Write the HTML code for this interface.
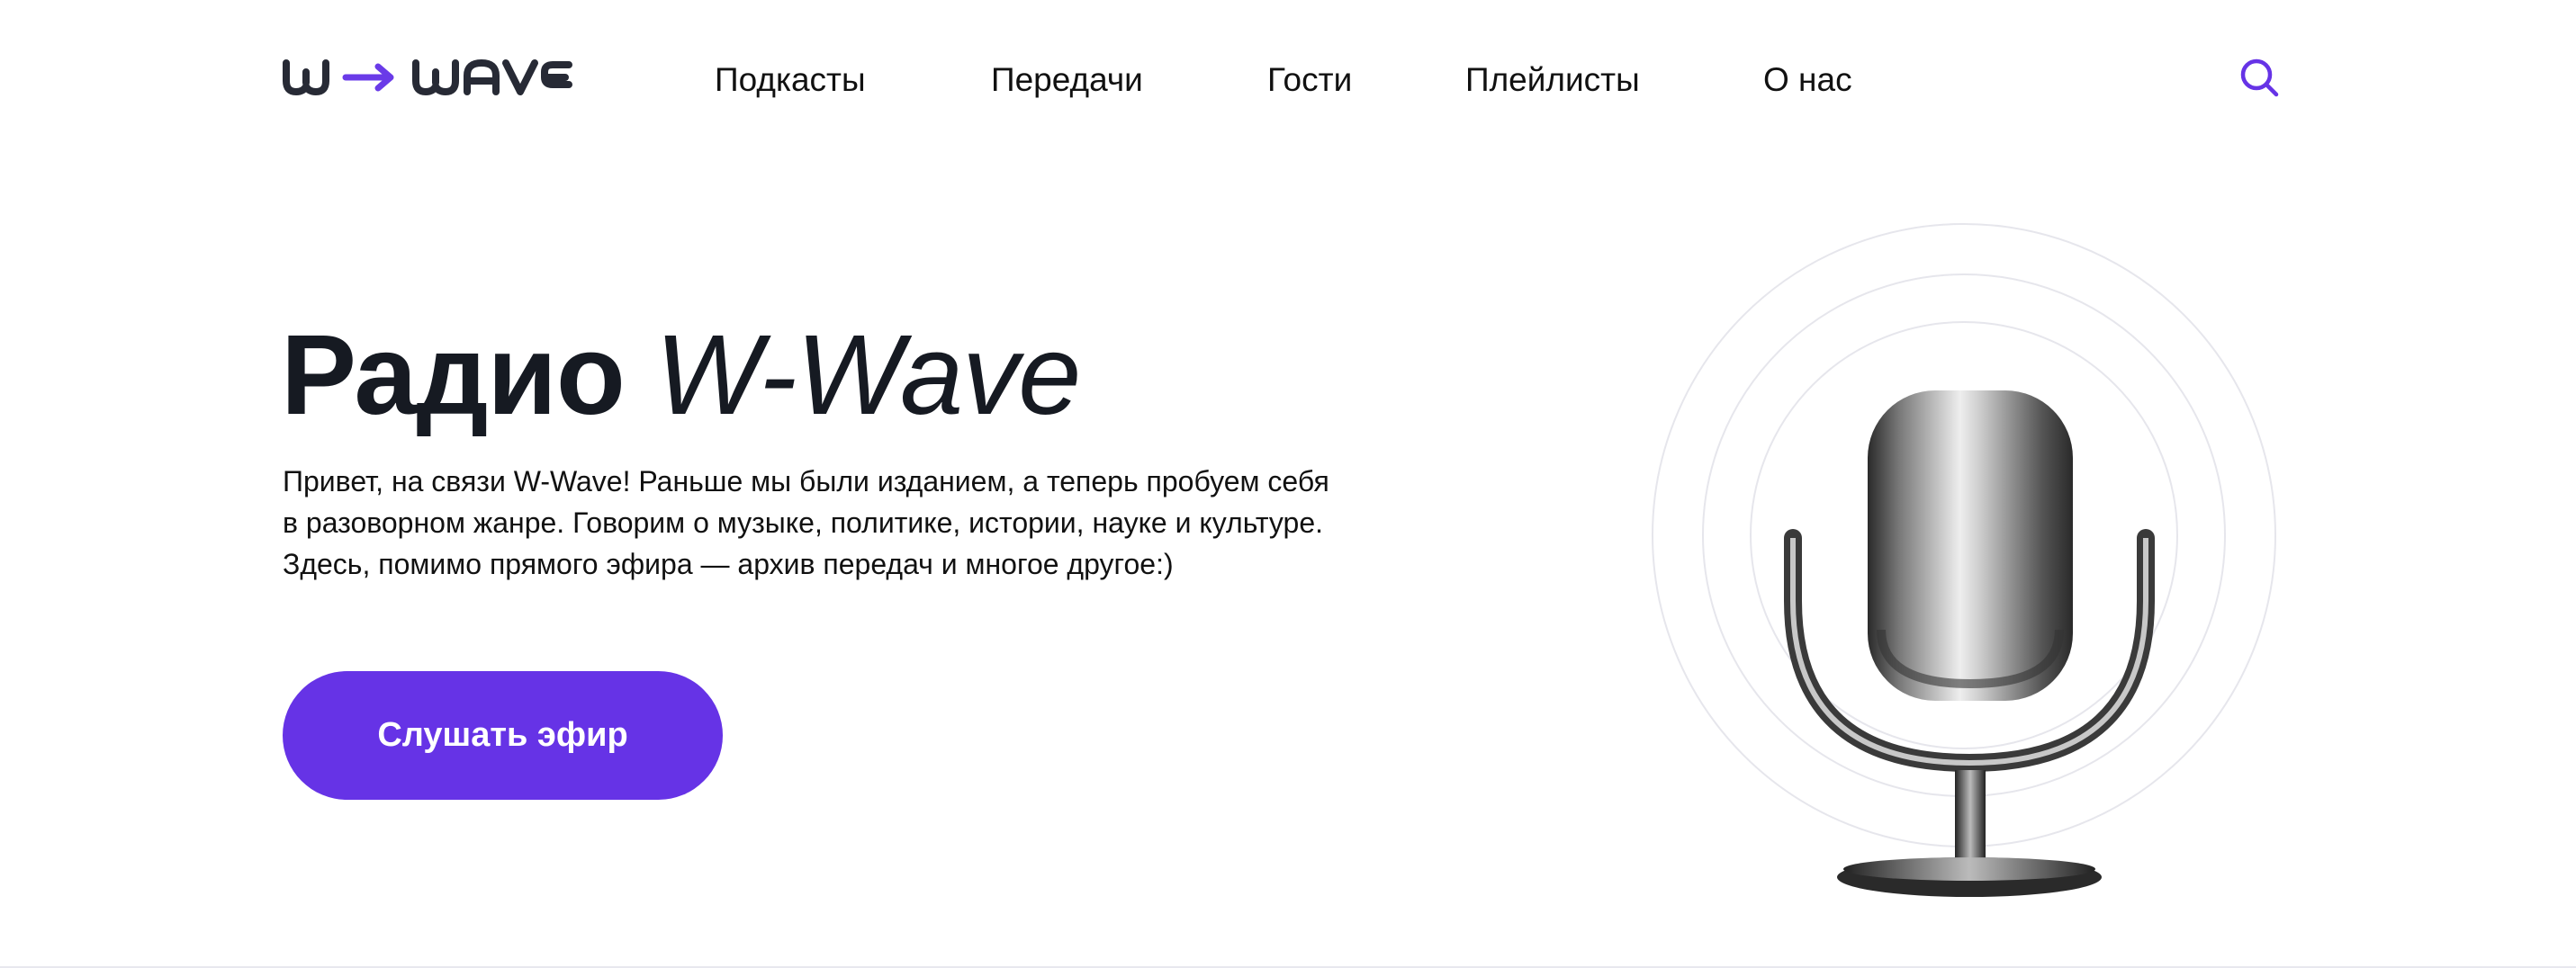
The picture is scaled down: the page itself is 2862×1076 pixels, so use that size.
<!DOCTYPE html>
<html><head><meta charset="utf-8"><style>
*{margin:0;padding:0;box-sizing:border-box}
body{width:2862px;height:1076px;background:#fff;position:relative;overflow:hidden;font-family:"Liberation Sans",sans-serif;color:#161a22}
.nav{position:absolute;top:68px;font-size:37px;color:#111}
h1{position:absolute;left:312px;top:354px;font-size:126px;font-weight:bold;letter-spacing:-1px;white-space:nowrap;line-height:1}
h1 i{font-weight:normal}
p{position:absolute;left:314px;top:512px;font-size:32px;line-height:46px;white-space:nowrap;color:#111}
.btn{position:absolute;left:314px;top:746px;width:489px;height:143px;border-radius:72px;background:#6633e6;color:#fff;font-size:38px;font-weight:bold;display:flex;align-items:center;justify-content:center}
.bl{position:absolute;left:0;bottom:0;width:100%;height:2px;background:#e8e8ee}
</style></head><body>
<svg style="position:absolute;left:312px;top:64px" width="325" height="44" viewBox="0 0 325 44">
<g fill="none" stroke="#272a35" stroke-width="8" stroke-linecap="round" stroke-linejoin="round">
<path d="M6 6v20q0 12 11 12q8 0 11-6q3 6 11 6q11 0 11-12V6M28 16v12"/>
<path d="M150 6v20q0 12 11 12q8 0 11-6q3 6 11 6q11 0 11-12V6M172 16v12"/>
<path d="M207 38V20q0-14 16-14q16 0 16 14v18M207 26h32"/>
<path d="M250 6l16 32l16-32"/>
<path d="M320 8h-18q-9 0-9 8v6q0 8 9 8h18M296 22h20"/>
</g>
<path d="M72 22h50M108 10l14 12l-14 12" fill="none" stroke="#6a3be8" stroke-width="7" stroke-linecap="round" stroke-linejoin="round"/>
</svg>
<div class="nav" style="left:794px">Подкасты</div>
<div class="nav" style="left:1101px">Передачи</div>
<div class="nav" style="left:1408px">Гости</div>
<div class="nav" style="left:1628px">Плейлисты</div>
<div class="nav" style="left:1959px">О нас</div>
<svg style="position:absolute;left:2488px;top:64px" width="46" height="46" viewBox="0 0 46 46"><circle cx="19" cy="19" r="15" fill="none" stroke="#6633e6" stroke-width="4.5"/><path d="M30 30l11 11" stroke="#6633e6" stroke-width="4.5" stroke-linecap="round"/></svg>
<h1>Радио <i>W-Wave</i></h1>
<p>Привет, на связи W-Wave! Раньше мы были изданием, а теперь пробуем себя<br>в разоворном жанре. Говорим о музыке, политике, истории, науке и культуре.<br>Здесь, помимо прямого эфира — архив передач и многое другое:)</p>
<div class="btn">Слушать эфир</div>
<svg style="position:absolute;left:0;top:0" width="2862" height="1076">
<defs>
<linearGradient id="m" x1="0" x2="1"><stop offset="0" stop-color="#2a2a2a"/><stop offset=".15" stop-color="#777"/><stop offset=".45" stop-color="#eee"/><stop offset=".55" stop-color="#ccc"/><stop offset=".85" stop-color="#555"/><stop offset="1" stop-color="#2a2a2a"/></linearGradient>
<linearGradient id="b" x1="0" x2="1"><stop offset="0" stop-color="#222"/><stop offset=".5" stop-color="#bbb"/><stop offset="1" stop-color="#222"/></linearGradient>
</defs>
<g fill="none" stroke="#e6e6ec" stroke-width="2"><circle cx="2182" cy="595" r="346"/><circle cx="2182" cy="595" r="290"/><circle cx="2182" cy="595" r="237"/></g>
<path d="M1992 598v70q0 180 196 180q196 0 196-180v-70" fill="none" stroke="#3a3a3a" stroke-width="20" stroke-linecap="round"/>
<path d="M1992 598v70q0 180 196 180q196 0 196-180v-70" fill="none" stroke="#c8c8c8" stroke-width="6"/>
<rect x="2172" y="856" width="34" height="100" fill="url(#b)"/>
<ellipse cx="2188" cy="975" rx="147" ry="22" fill="#2a2a2a"/>
<ellipse cx="2188" cy="966" rx="140" ry="13" fill="url(#b)"/>
<rect x="2075" y="434" width="228" height="345" rx="75" fill="url(#m)"/>
<path d="M2090 700q0 60 99 60q99 0 99-60" fill="none" stroke="#333" stroke-width="10" opacity=".6"/>
</svg>
<div class="bl"></div>
</body></html>
